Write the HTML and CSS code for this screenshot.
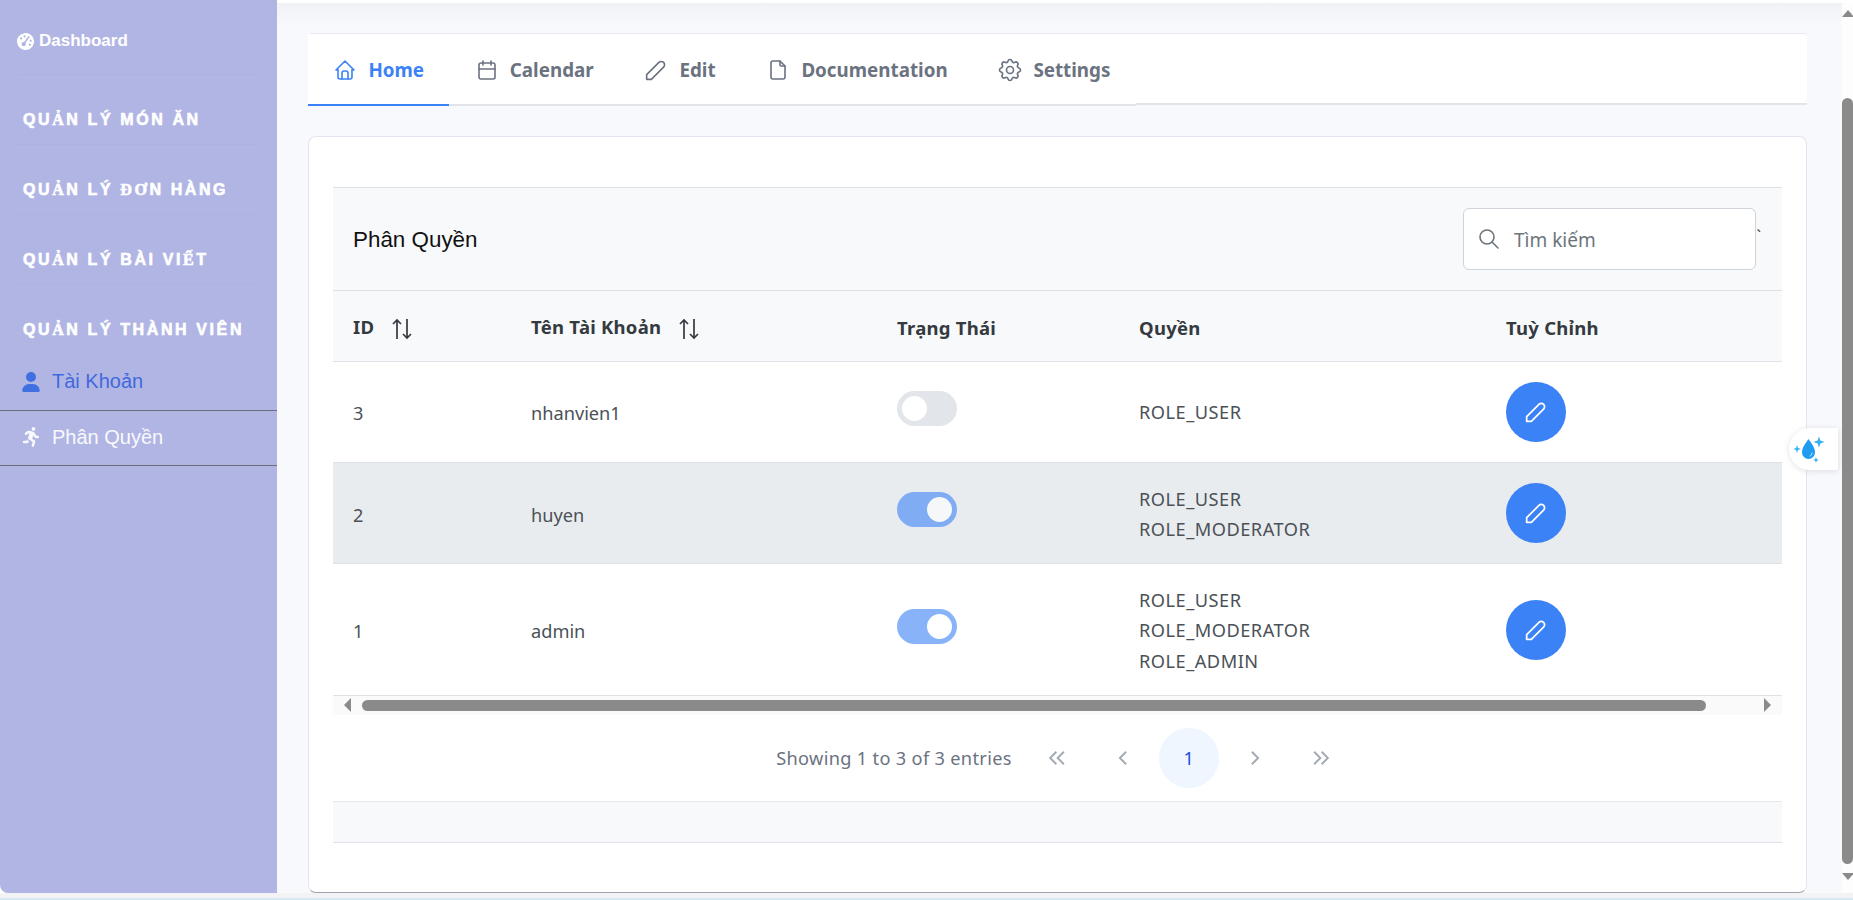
FILE: index.html
```html
<!DOCTYPE html>
<html lang="vi">
<head>
    <meta charset="UTF-8">
    <meta name="viewport" content="width=device-width, initial-scale=1.0">
    <title>Phân Quyền</title>
    <link rel="stylesheet" href="styles.css">
</head>
<body>
    <div class="app">
        <aside class="sidebar">
            <a class="brand">
                <svg class="brand-icon" viewBox="0 0 512 512"><path fill="currentColor" transform="rotate(35 256 256)" d="M0 256a256 256 0 1 1 512 0A256 256 0 1 1 0 256zm320 96c0-26.9-16.5-49.9-40-59.3V88c0-13.3-10.7-24-24-24s-24 10.7-24 24V292.7c-23.5 9.5-40 32.5-40 59.3c0 35.3 28.7 64 64 64s64-28.7 64-64zM144 176a32 32 0 1 0 0-64 32 32 0 1 0 0 64zm-16 80a32 32 0 1 0 -64 0 32 32 0 1 0 64 0zm288 32a32 32 0 1 0 0-64 32 32 0 1 0 0 64zM400 144a32 32 0 1 0 -64 0 32 32 0 1 0 64 0z"/></svg>
                Dashboard
            </a>
            <div class="menu-title">QU<span class="fb">Ả</span>N LÝ MÓN ĂN</div>
            <div class="menu-title">QU<span class="fb">Ả</span>N LÝ <span class="fb">ĐƠ</span>N HÀNG</div>
            <div class="menu-title">QU<span class="fb">Ả</span>N LÝ BÀI VI<span class="fb">Ế</span>T</div>
            <div class="menu-title menu-title-last">QU<span class="fb">Ả</span>N LÝ THÀNH VIÊN</div>
            <a class="menu-link active">
                <svg viewBox="0 0 448 512"><path fill="currentColor" d="M224 256A128 128 0 1 0 224 0a128 128 0 1 0 0 256zm-45.7 48C79.8 304 0 383.8 0 482.3C0 498.7 13.3 512 29.7 512H418.3c16.4 0 29.7-13.3 29.7-29.7C448 383.8 368.2 304 269.7 304H178.3z"/></svg>
                Tài Khoản
            </a>
            <a class="menu-link">
                <svg viewBox="0 0 417 512"><path fill="currentColor" d="M320 48a48 48 0 1 0 -96 0 48 48 0 1 0 96 0zM125.7 175.5c9.9-9.9 23.4-15.5 37.5-15.5c1.9 0 3.8 .1 5.6 .3L137.6 254c-9.3 28 1.7 58.8 26.8 74.5l86.2 53.9-25.4 88.8c-4.9 17 5 34.7 22 39.6s34.7-5 39.6-22l28.7-100.4c5.9-20.6-2.6-42.6-20.7-53.9L238 299l30.9-82.4 5.1 12.3C289 264.7 323.9 288 362.7 288H384c17.7 0 32-14.3 32-32s-14.3-32-32-32H362.7c-12.9 0-24.6-7.8-29.5-19.7l-6.3-15c-14.6-35.1-44.1-61.9-80.5-73.1l-48.7-15c-11.1-3.4-22.7-5.2-34.4-5.2c-31 0-60.8 12.3-82.7 34.3L57.4 153.4c-12.5 12.5-12.5 32.8 0 45.3s32.8 12.5 45.3 0l23.1-23.1zM91.2 352H32c-17.7 0-32 14.3-32 32s14.3 32 32 32h69.6c19 0 36.2-11.2 43.9-28.5L157 361.6l-9.5-6c-17.5-10.9-30.5-26.8-37.9-44.9L91.2 352z"/></svg>
                Phân Quyền
            </a>
        </aside>

        <main class="main">
            <nav class="tabs">
                <a class="tab active">
                    <svg class="icon" viewBox="0 0 24 24"><path d="M5 12l-2 0l9 -9l9 9l-2 0"/><path d="M5 12v7a2 2 0 0 0 2 2h10a2 2 0 0 0 2 -2v-7"/><path d="M9 21v-6a2 2 0 0 1 2 -2h2a2 2 0 0 1 2 2v6"/></svg>
                    Home
                </a>
                <a class="tab">
                    <svg class="icon" viewBox="0 0 24 24"><rect x="4" y="5" width="16" height="16" rx="2"/><path d="M16 3v4"/><path d="M8 3v4"/><path d="M4 11h16"/></svg>
                    Calendar
                </a>
                <a class="tab">
                    <svg class="icon icon-big" viewBox="0 0 24 24"><path d="M4 20h4l10.5 -10.5a2.828 2.828 0 1 0 -4 -4l-10.5 10.5v4"/></svg>
                    Edit
                </a>
                <a class="tab">
                    <svg class="icon" viewBox="0 0 24 24"><path d="M14 3v4a1 1 0 0 0 1 1h4"/><path d="M17 21h-10a2 2 0 0 1 -2 -2v-14a2 2 0 0 1 2 -2h7l5 5v11a2 2 0 0 1 -2 2z"/></svg>
                    Documentation
                </a>
                <a class="tab">
                    <svg class="icon icon-big" viewBox="0 0 24 24"><path d="M10.325 4.317c.426 -1.756 2.924 -1.756 3.35 0a1.724 1.724 0 0 0 2.573 1.066c1.543 -.94 3.31 .826 2.37 2.37a1.724 1.724 0 0 0 1.065 2.572c1.756 .426 1.756 2.924 0 3.35a1.724 1.724 0 0 0 -1.066 2.573c.94 1.543 -.826 3.31 -2.37 2.37a1.724 1.724 0 0 0 -2.572 1.065c-.426 1.756 -2.924 1.756 -3.35 0a1.724 1.724 0 0 0 -2.573 -1.066c-1.543 .94 -3.31 -.826 -2.37 -2.37a1.724 1.724 0 0 0 -1.065 -2.572c-1.756 -.426 -1.756 -2.924 0 -3.35a1.724 1.724 0 0 0 1.066 -2.573c-.94 -1.543 .826 -3.31 2.37 -2.37c1 .608 2.296 .07 2.572 -1.065z"/><circle cx="12" cy="12" r="3"/></svg>
                    Settings
                </a>
            </nav>

            <section class="card">
                <div class="table-caption">
                    <h2>Phân Quyền</h2>
                    <div class="search">
                        <svg class="icon" viewBox="0 0 24 24"><circle cx="10" cy="10" r="7"/><path d="M21 21l-6 -6"/></svg>
                        <span>Tìm kiếm</span>
                        <i class="stray">`</i>
                    </div>
                </div>

                <table class="data-table">
                    <colgroup>
                        <col class="col-id"><col class="col-name"><col class="col-status"><col class="col-role"><col>
                    </colgroup>
                    <thead>
                        <tr>
                            <th>ID <svg class="sort" viewBox="0 0 22 22"><path d="M6 21V2M2 6l4-4 4 4"/><path d="M16 1v19M12 16l4 4 4-4"/></svg></th>
                            <th>Tên Tài Khoản <svg class="sort" viewBox="0 0 22 22"><path d="M6 21V2M2 6l4-4 4 4"/><path d="M16 1v19M12 16l4 4 4-4"/></svg></th>
                            <th>Trạng Thái</th>
                            <th>Quyền</th>
                            <th>Tuỳ Chỉnh</th>
                        </tr>
                    </thead>
                    <tbody>
                        <tr>
                            <td>3</td>
                            <td>nhanvien1</td>
                            <td class="ctrl"><span class="switch"></span></td>
                            <td class="roles">ROLE_USER</td>
                            <td class="ctrl"><button class="edit-btn"><svg class="icon" viewBox="0 0 24 24"><path d="M4 20h4l10.5 -10.5a2.828 2.828 0 1 0 -4 -4l-10.5 10.5v4"/></svg></button></td>
                        </tr>
                        <tr class="striped">
                            <td>2</td>
                            <td>huyen</td>
                            <td class="ctrl"><span class="switch on"></span></td>
                            <td class="roles">ROLE_USER<br>ROLE_MODERATOR</td>
                            <td class="ctrl"><button class="edit-btn"><svg class="icon" viewBox="0 0 24 24"><path d="M4 20h4l10.5 -10.5a2.828 2.828 0 1 0 -4 -4l-10.5 10.5v4"/></svg></button></td>
                        </tr>
                        <tr>
                            <td>1</td>
                            <td>admin</td>
                            <td class="ctrl"><span class="switch on"></span></td>
                            <td class="roles">ROLE_USER<br>ROLE_MODERATOR<br>ROLE_ADMIN</td>
                            <td class="ctrl"><button class="edit-btn"><svg class="icon" viewBox="0 0 24 24"><path d="M4 20h4l10.5 -10.5a2.828 2.828 0 1 0 -4 -4l-10.5 10.5v4"/></svg></button></td>
                        </tr>
                    </tbody>
                </table>

                <div class="hscroll">
                    <i class="arrow-left"></i>
                    <div class="hscroll-thumb"></div>
                    <i class="arrow-right"></i>
                </div>

                <div class="paginator">
                    <span class="page-info">Showing 1 to 3 of 3 entries</span>
                    <a class="page-btn"><svg viewBox="0 0 16 16"><path d="M7.5 3L2.5 8l5 5M13.5 3l-5 5 5 5"/></svg></a>
                    <a class="page-btn"><svg viewBox="0 0 16 16"><path d="M10.5 3l-5 5 5 5"/></svg></a>
                    <a class="page-btn current">1</a>
                    <a class="page-btn"><svg viewBox="0 0 16 16"><path d="M5.5 3l5 5-5 5"/></svg></a>
                    <a class="page-btn"><svg viewBox="0 0 16 16"><path d="M2.5 3l5 5-5 5M8.5 3l5 5-5 5"/></svg></a>
                </div>

                <div class="table-footer"></div>
            </section>

            <div class="drop-widget">
                <svg viewBox="0 0 34 34">
                    <path fill="#1f9cf0" d="M14.500 7c-2.500 4-6.500 8-6.500 13.500a6.500 6.500 0 0 0 13 0c0-5.500-4-9.500-6.500-13.500z"/>
                    <path fill="none" stroke="#bfe3fb" stroke-width="1" d="M18 20.500c0 2-1 3.300-2.500 3.700"/>
                    <path fill="#38b0f5" d="M25 4.500l1.400 4.100 4.100 1.400-4.100 1.400-1.400 4.100-1.400-4.100-4.100-1.400 4.100-1.400zM3 13l1 3 3 1-3 1-1 3-1-3-3-1 3-1zM22 25l.8 2.200 2.200.8-2.200.8-.8 2.200-.8-2.200-2.200-.8 2.200-.8z"/>
                </svg>
            </div>
        </main>

        <div class="vscroll">
            <i class="arrow-up"></i>
            <div class="vscroll-thumb"></div>
            <i class="arrow-down"></i>
        </div>
    </div>
    <div class="taskbar"></div>
</body>
</html>
```

FILE: styles.css
```css
* { box-sizing: border-box; }
html, body { height: 100%; }
body { margin: 0; overflow: hidden; background: #fff; font-family: "Noto Sans", sans-serif; font-size: 18.2px; color: #4b5157; }
.app { display: flex; height: 893px; }
.taskbar { height: 7px; background: linear-gradient(#f3f3f5 0 5px, #d6e8f1 5px); }

/* sidebar */
.sidebar { width: 277px; flex: none; background: #b1b5e4; color: #fff; border-bottom-left-radius: 8px; font-family: "Liberation Sans", sans-serif; }
.brand { display: flex; align-items: center; gap: 5px; height: 75px; margin: 0 20px 0 17px; padding-top: 8px; font-size: 17px; font-weight: bold; border-bottom: 1px solid #adb1e2; }
.brand-icon { width: 17px; height: 17px; }
.menu-title { display: flex; align-items: center; height: 70px; margin: 0 20px 0 17px; padding: 20px 0 0 6px; font-size: 16px; font-weight: bold; letter-spacing: 2.6px; white-space: pre; -webkit-text-stroke: .6px #fff; border-bottom: 1px solid #adb1e2; }
.menu-title-last { border-bottom: 0; height: 74px; padding-top: 16px; }
.fb { font-family: "Liberation Serif", serif; }
.menu-link { display: flex; align-items: center; gap: 12px; height: 55px; padding: 0 0 2px 22px; font-size: 20px; color: #f8f9fc; border-bottom: 1px solid #6c6c7a; }
.menu-link svg { width: 18px; height: 20px; }
.menu-link.active { height: 52px; padding-bottom: 6px; color: #4169dc; }
.menu-link.active svg { color: #3f6fe0; }

/* main area */
.main { position: relative; flex: 1; margin-top: 3px; padding: 30px 35px 0 31px; background: linear-gradient(#f1f2f6, #f8f9fd 22px); }
.icon { fill: none; stroke: currentColor; stroke-width: 1.6; stroke-linecap: round; stroke-linejoin: round; }

/* tabs */
.tabs { display: flex; height: 72px; background: #fff; border-top: 1px solid #e6e8f2; border-bottom: 2px solid #e2e4ea; border-radius: 4px 4px 0 0; }
.tab { display: flex; align-items: center; gap: 11px; height: 72px; margin-bottom: -2px; padding: 1px 25.4px 0; font-size: 18.8px; font-weight: 700; color: #6b7280; border-bottom: 2px solid #e2e4ea; background: #fff; }
.tab .icon { width: 24px; height: 24px; }
.tab .icon-big { width: 28px; height: 28px; margin: 0 -2px; stroke-width: 1.4; }
.tab.active { color: #3b82f6; border-bottom-color: #3b82f6; }

/* card */
.card { display: flex; flex-direction: column; height: 757px; margin-top: 31px; padding: 50px 24px 0; background: #fff; border: 1px solid #e4e5ee; border-bottom: 1px solid #a3a3b0; border-radius: 8px; }
.table-caption { display: flex; align-items: center; justify-content: space-between; height: 104px; padding: 0 26px 0 20px; background: #f8f9fb; border-top: 1px solid #dee2e6; border-bottom: 1px solid #dee2e6; flex: none; }
.table-caption h2 { margin: 0; padding-top: 1px; font-family: "Liberation Sans", sans-serif; font-size: 22.4px; font-weight: normal; color: #111; }
.search { position: relative; display: flex; align-items: center; gap: 13px; width: 293px; height: 62px; padding-left: 13px; background: #fff; border: 1px solid #ced4da; border-radius: 6px; font-size: 19px; color: #6c757d; }
.search span { padding-top: 2px; }
.search .icon { width: 24px; height: 24px; }
.stray { position: absolute; right: -6px; top: 17px; font-style: normal; font-size: 16px; line-height: 20px; color: #333; }

/* table */
.data-table { width: 100%; table-layout: fixed; border-collapse: collapse; flex: none; }
.col-id { width: 178px; }
.col-name { width: 366px; }
.col-status { width: 242px; }
.col-role { width: 367px; }
th { height: 70px; padding: 3px 20px 0; text-align: left; font-size: 18.5px; letter-spacing: .25px; font-weight: 700; color: #343a40; background: #f8f9fb; border-bottom: 1px solid #dee2e6; white-space: nowrap; }
td { padding: 22px 20px 18px; line-height: 30.3px; font-size: 18.2px; color: #4b5157; border-bottom: 1px solid #dee2e6; }
td.ctrl { padding: 20px; }
td.roles { padding: 21px 20px 19px; letter-spacing: .5px; }
.striped td { background: #e9ecef; }
.sort { width: 22px; height: 22px; margin-left: 12px; vertical-align: -6px; fill: none; stroke: #343a40; stroke-width: 1.7; }
.switch { position: relative; display: inline-block; width: 60px; height: 35px; margin-bottom: 6px; vertical-align: middle; border-radius: 18px; background: #e2e5e9; }
.switch::after { content: ""; position: absolute; left: 5px; top: 5px; width: 25px; height: 25px; border-radius: 50%; background: #fff; }
.switch.on { background: #3b82f6; opacity: .6; }
.switch.on::after { left: 30px; }
.edit-btn { display: block; width: 60px; height: 60px; padding: 0; border: 0; border-radius: 50%; background: #3b82f6; color: #fff; }
.edit-btn .icon { display: block; width: 28px; height: 28px; margin: auto; stroke-width: 1.5; }

/* fake scrollbars */
.hscroll { display: flex; align-items: center; flex: none; height: 19px; background: #fafafa; padding: 0 11px; }
.hscroll-thumb { width: 1344px; height: 11px; margin: 0 auto 0 11px; border-radius: 6px; background: #8a8a8a; }
.arrow-left { border: 7px solid transparent; border-left: 0; border-right: 7px solid #8a8a8a; }
.arrow-right { border: 7px solid transparent; border-right: 0; border-left: 7px solid #8a8a8a; }
.vscroll { display: flex; flex-direction: column; align-items: center; width: 11px; flex: none; margin-top: 3px; padding-top: 7px; background: #fdfdfd; }
.vscroll-thumb { width: 11px; height: 766px; margin-top: 81px; border-radius: 6px; background: #8a8a8a; }
.arrow-up { border: 6px solid transparent; border-top: 0; border-bottom: 7px solid #8a8a8a; }
.arrow-down { margin-top: 9px; border: 6px solid transparent; border-bottom: 0; border-top: 7px solid #8a8a8a; }

/* paging */
.paginator { display: flex; align-items: center; justify-content: center; gap: 6px; flex: none; height: 87px; padding-left: 12px; font-size: 18.2px; border-bottom: 1px solid #e5e8ec; }
.page-info { margin-right: 9px; letter-spacing: .32px; color: #6b7280; }
.page-btn { display: flex; align-items: center; justify-content: center; width: 60px; height: 60px; border-radius: 50%; color: #1d4ed8; }
.page-btn svg { width: 20px; height: 20px; fill: none; stroke: #a3a9b2; stroke-width: 1.5; }
.page-btn.current { background: #eff6ff; }
.table-footer { flex: none; height: 41px; background: #f8f9fb; border-bottom: 1px solid #dee2e6; }

/* floating widget on the right edge */
.drop-widget { position: absolute; right: 4px; top: 425px; width: 49px; height: 42px; padding: 4px 0 0 5px; background: #fff; border-radius: 21px 0 0 21px; box-shadow: 0 1px 6px rgba(0,0,0,.12); }
.drop-widget svg { display: block; width: 34px; height: 34px; }
```
